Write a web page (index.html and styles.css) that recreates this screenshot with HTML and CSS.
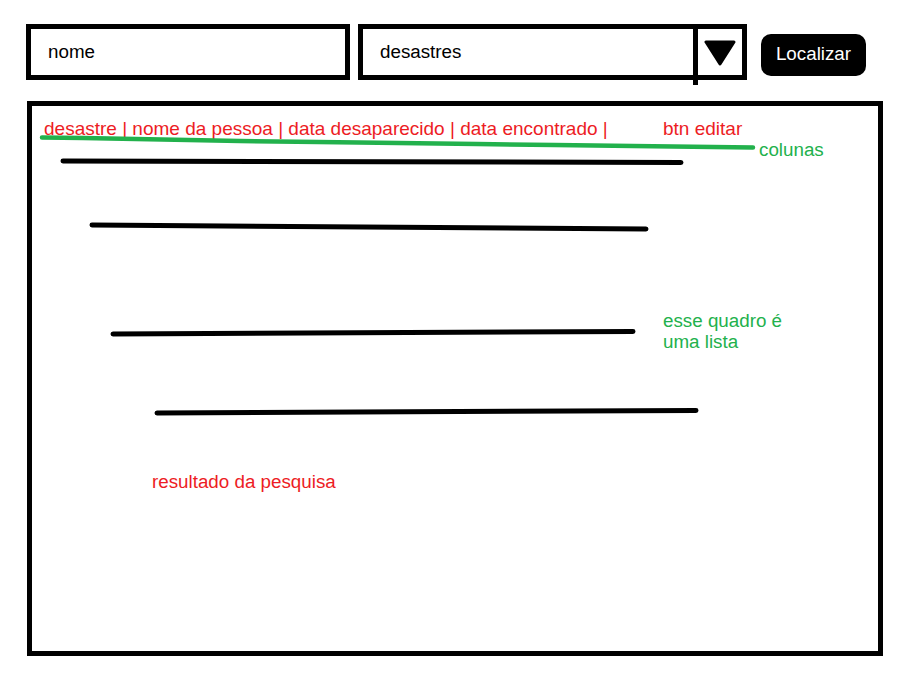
FILE: index.html
```html
<!DOCTYPE html>
<html lang="pt">
<head>
<meta charset="utf-8">
<title>Busca de desaparecidos</title>
<link rel="stylesheet" href="styles.css">
</head>
<body>
<div class="page">
  <div class="toolbar">
    <div class="field">nome</div>
    <div class="select">
      <div class="select-value">desastres</div>
      <div class="select-arrow">
        <svg width="32" height="26" viewBox="0 0 32 26"><polygon points="2,2 30,2 16,24" fill="#000" stroke="#000" stroke-width="3" stroke-linejoin="round"/></svg>
      </div>
    </div>
    <button class="btn">Localizar</button>
  </div>

  <div class="list">
    <div class="list-header">
      <span class="cols">desastre | nome da pessoa | data desaparecido | data encontrado |</span>
      <span class="cols">btn editar</span>
    </div>
    <svg class="strokes" width="846" height="545" viewBox="32 106 846 545">
      <polyline points="42,137.5 83,138 162,139.5 240,141 318,142 398,143 477,144 555,145 633,146 713,147 753,147.5" fill="none" stroke="#22b14c" stroke-width="4.5" stroke-linecap="round" stroke-linejoin="round"/>
      <g stroke="#000" stroke-width="5" stroke-linecap="round">
        <line x1="63" y1="161" x2="681" y2="162.5"/>
        <line x1="92" y1="225" x2="646" y2="229"/>
        <line x1="113" y1="334" x2="633" y2="331.5"/>
        <line x1="157" y1="413" x2="696" y2="410.5"/>
      </g>
    </svg>
    <div class="note note-colunas">colunas</div>
    <div class="note note-lista">esse quadro é<br>uma lista</div>
    <div class="note note-result">resultado da pesquisa</div>
  </div>
</div>
</body>
</html>
```

FILE: styles.css
```css
html, body {
  margin: 0;
  padding: 0;
  background: #fff;
}

body {
  font-family: "Liberation Sans", Arial, sans-serif;
  font-size: 18.8px;
  color: #000;
}

.page {
  width: 906px;
  height: 680px;
  padding: 24px 0 0 26px;
  box-sizing: border-box;
}

.toolbar {
  display: flex;
  align-items: flex-start;
}

.field {
  width: 324px;
  height: 56px;
  box-sizing: border-box;
  border: 5px solid #000;
  display: flex;
  align-items: center;
  padding-left: 17px;
}

.select {
  margin-left: 8px;
  width: 389px;
  height: 56px;
  box-sizing: border-box;
  border: 5px solid #000;
  display: flex;
}

.select-value {
  flex: 1;
  display: flex;
  align-items: center;
  padding-left: 17px;
}

.select-arrow {
  position: relative;
  width: 44px;
  border-left: 5px solid #000;
  display: flex;
  align-items: center;
  justify-content: center;
  padding-top: 1px;
}

.select-arrow::after {
  content: "";
  position: absolute;
  left: -5px;
  top: 100%;
  width: 5px;
  height: 10px;
  background: #000;
}

.btn {
  margin-left: 14px;
  margin-top: 10px;
  width: 105px;
  height: 42px;
  border: none;
  border-radius: 10px;
  background: #000;
  color: #fff;
  font-family: inherit;
  font-size: 18.8px;
  padding: 0 0 3px 0;
}

.list {
  position: relative;
  margin-top: 21px;
  margin-left: 1px;
  width: 856px;
  height: 555px;
  box-sizing: border-box;
  border: 5px solid #000;
}

.list-header {
  display: grid;
  grid-template-columns: 619px auto;
  padding: 12px 0 0 12px;
  font-size: 19px;
  color: #ed1c24;
}

.strokes {
  position: absolute;
  left: 0;
  top: 0;
  pointer-events: none;
}

.note {
  position: absolute;
  line-height: 21px;
}

.note-colunas {
  left: 727px;
  top: 33px;
  color: #22b14c;
}

.note-lista {
  left: 631px;
  top: 204px;
  color: #22b14c;
}

.note-result {
  left: 120px;
  top: 365px;
  color: #ed1c24;
}
```
